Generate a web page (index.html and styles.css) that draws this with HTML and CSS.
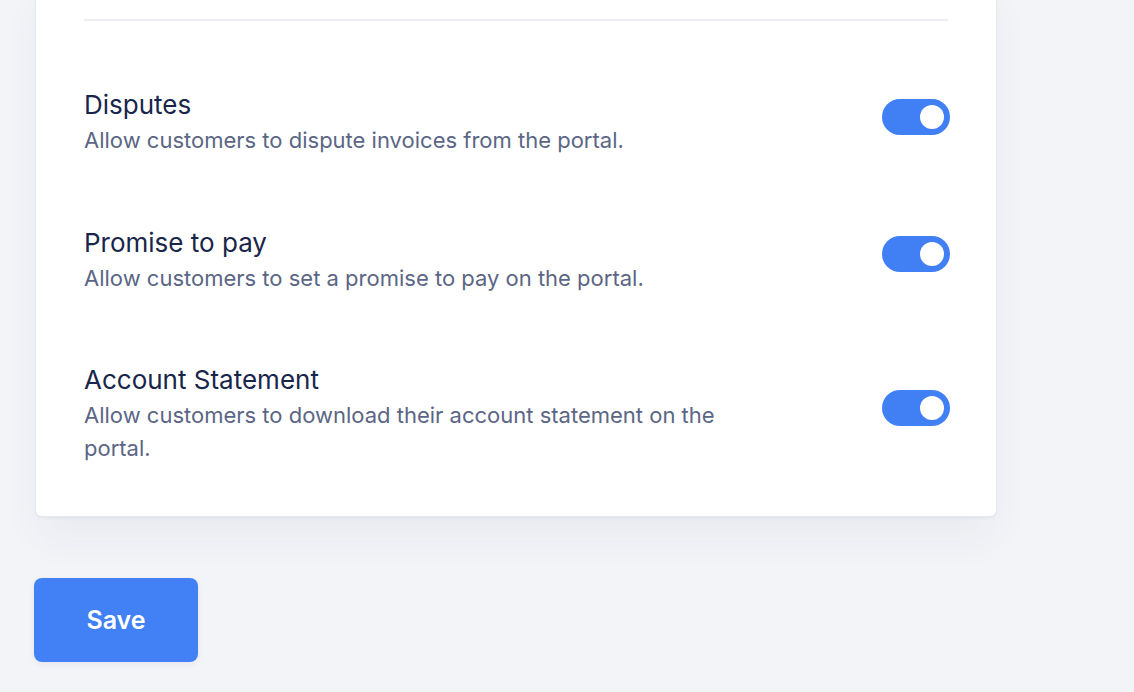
FILE: index.html
```html
<!DOCTYPE html>
<html lang="en">

<head>
    <meta charset="UTF-8">
    <meta name="viewport" content="width=device-width, initial-scale=1.0">
    <title>Portal settings</title>
    <link rel="stylesheet" href="styles.css">
</head>

<body>
    <div class="page">
        <!-- portal settings card (scrolled, top is out of view) -->
        <div class="card">
            <div class="divider"></div>

            <div class="setting">
                <div class="setting-text">
                    <div class="setting-title">Disputes</div>
                    <div class="setting-desc">Allow customers to dispute invoices from the portal.</div>
                </div>
                <button class="toggle on" type="button"><span class="knob"></span></button>
            </div>

            <div class="setting">
                <div class="setting-text">
                    <div class="setting-title">Promise to pay</div>
                    <div class="setting-desc">Allow customers to set a promise to pay on the portal.</div>
                </div>
                <button class="toggle on" type="button"><span class="knob"></span></button>
            </div>

            <div class="setting">
                <div class="setting-text">
                    <div class="setting-title">Account Statement</div>
                    <div class="setting-desc">Allow customers to download their account statement on the portal.</div>
                </div>
                <button class="toggle on" type="button"><span class="knob"></span></button>
            </div>
        </div>

        <button class="save-btn" type="button">Save</button>
    </div>

    <script>
        // toggle on/off
        document.querySelectorAll('.toggle').forEach(function (t) {
            t.addEventListener('click', function () {
                t.classList.toggle('on');
            });
        });
    </script>
</body>

</html>
```

FILE: styles.css
```css
body {
    margin: 0;
    background-color: #f3f4f8;
    font-family: Inter, "Noto Sans", sans-serif;
}

.page {
    padding: 0 34px 40px;
}

.card {
    width: 960px;
    margin-left: 2px;
    margin-top: -20px;
    padding: 39px 48px 51px;
    box-sizing: border-box;
    background-color: #fff;
    border-radius: 6px;
    box-shadow: 0 0 0 1px #e6e8ed, 0 2px 3px rgba(30, 40, 70, 0.06), 0 24px 40px rgba(30, 40, 70, 0.045);
}

.divider {
    height: 2px;
    background-color: #eceef3;
    margin-bottom: 66px;
}

.setting {
    display: flex;
    justify-content: space-between;
    align-items: center;
    margin-bottom: 67.5px;
}

.setting:last-child {
    margin-bottom: 0;
}

.setting-text {
    max-width: 665px;
}

.setting-title {
    font-size: 26px;
    line-height: 35px;
    color: #18264a;
}

.setting-desc {
    margin-top: 2px;
    font-size: 22px;
    line-height: 33px;
    color: #5b6685;
}

.toggle {
    position: relative;
    width: 68px;
    height: 36px;
    margin-right: -2px;
    margin-bottom: 11px;
    padding: 0;
    border: none;
    border-radius: 18px;
    background-color: #d3d8e2;
    cursor: pointer;
    flex-shrink: 0;
}

.toggle.on {
    background-color: #407ff4;
}

.knob {
    position: absolute;
    top: 6px;
    left: 6px;
    width: 24px;
    height: 24px;
    border-radius: 50%;
    background-color: #fff;
    transition: 0.2s;
}

.toggle.on .knob {
    left: 38px;
}

.save-btn {
    display: block;
    margin-top: 62px;
    width: 164px;
    height: 84px;
    border: none;
    border-radius: 8px;
    background-color: #4180f5;
    color: #fff;
    font-family: Inter, "Noto Sans", sans-serif;
    font-size: 25px;
    font-weight: 600;
    cursor: pointer;
    box-shadow: 0 2px 6px rgba(30, 40, 70, 0.06);
}
```
